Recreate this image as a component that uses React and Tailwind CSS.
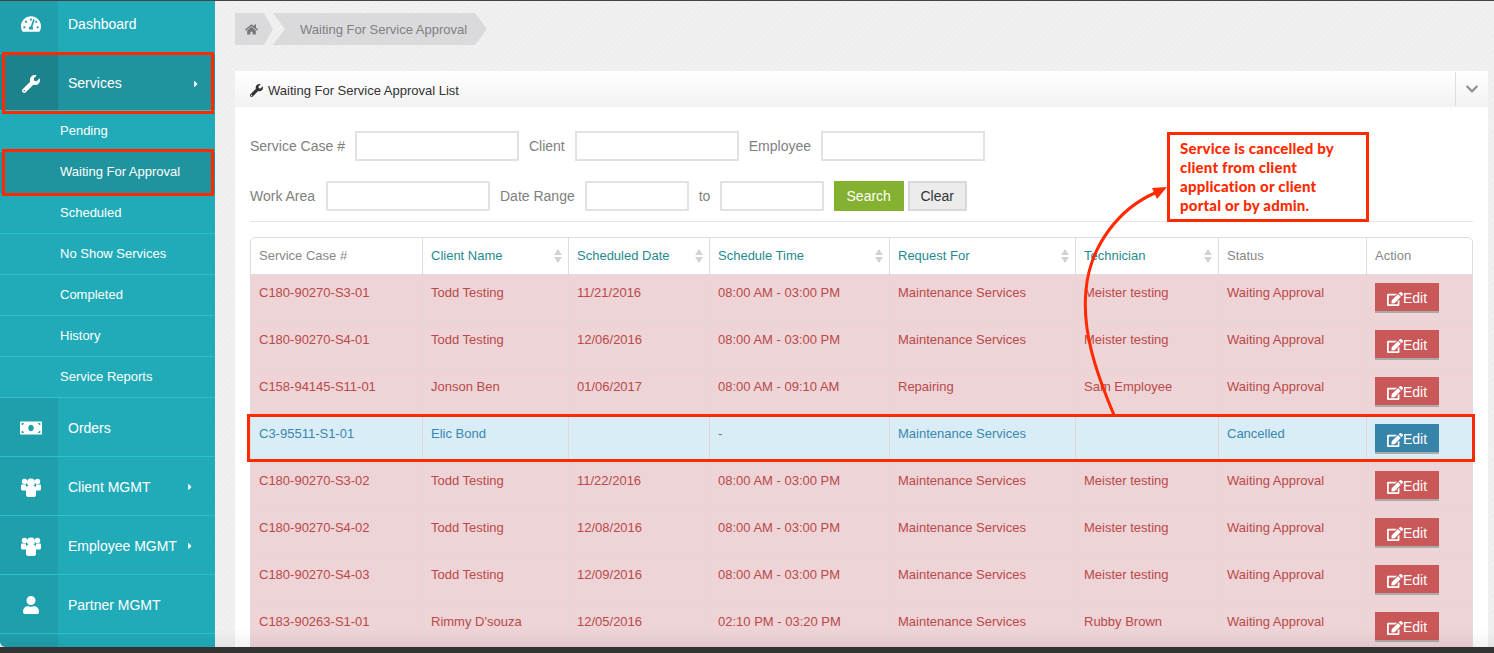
import {
  FaTachometerAlt,
  FaWrench,
  FaMoneyBill,
  FaUser,
  FaHome,
  FaEdit,
  FaChevronDown,
  FaCaretRight,
} from "react-icons/fa";

const subItems = [
  "Pending",
  "Waiting For Approval",
  "Scheduled",
  "No Show Services",
  "Completed",
  "History",
  "Service Reports",
];

const columns = [
  { name: "Service Case #", width: "w-[171px]" },
  { name: "Client Name", width: "w-[146px]", sort: true },
  { name: "Scheduled Date", width: "w-[141px]", sort: true },
  { name: "Schedule Time", width: "w-[180px]", sort: true },
  { name: "Request For", width: "w-[186px]", sort: true },
  { name: "Technician", width: "w-[143px]", sort: true },
  { name: "Status", width: "w-[148px]" },
  { name: "Action", width: "w-[106px]" },
];

const waiting = "Waiting Approval";
const maint = "Maintenance Services";
const rows = [
  ["C180-90270-S3-01", "Todd Testing", "11/21/2016", "08:00 AM - 03:00 PM", maint, "Meister testing", waiting],
  ["C180-90270-S4-01", "Todd Testing", "12/06/2016", "08:00 AM - 03:00 PM", maint, "Meister testing", waiting],
  ["C158-94145-S11-01", "Jonson Ben", "01/06/2017", "08:00 AM - 09:10 AM", "Repairing", "Sam Employee", waiting],
  ["C3-95511-S1-01", "Elic Bond", "", "-", maint, "", "Cancelled"],
  ["C180-90270-S3-02", "Todd Testing", "11/22/2016", "08:00 AM - 03:00 PM", maint, "Meister testing", waiting],
  ["C180-90270-S4-02", "Todd Testing", "12/08/2016", "08:00 AM - 03:00 PM", maint, "Meister testing", waiting],
  ["C180-90270-S4-03", "Todd Testing", "12/09/2016", "08:00 AM - 03:00 PM", maint, "Meister testing", waiting],
  ["C183-90263-S1-01", "Rimmy D'souza", "12/05/2016", "02:10 PM - 03:20 PM", maint, "Rubby Brown", waiting],
];

// old font-awesome group icon, the package version is too flat
const GroupIcon = () => (
  <svg width="20" height="19" viewBox="0 0 20 19" fill="currentColor">
    <circle cx="3.5" cy="3.5" r="2.7" />
    <circle cx="16.5" cy="3.5" r="2.7" />
    <circle cx="10" cy="4.5" r="4" />
    <path d="M0 7.5 Q0 6.5 1 6.5 H5 V12.5 H1.5 Q0 12.5 0 11 Z" />
    <path d="M20 7.5 Q20 6.5 19 6.5 H15 V12.5 H18.5 Q20 12.5 20 11 Z" />
    <path d="M5 10 Q5 8 7 8 H13 Q15 8 15 10 V16.5 Q15 19 12.5 19 H7.5 Q5 19 5 16.5 Z" />
  </svg>
);

// main sidebar row with the darker icon column
const NavItem = ({ icon, label, arrow, active, height = "h-[59px]", pad = "pt-[2px]", arrowClass = "mr-[20px]" }) => (
  <div className={`flex ${height} border-b border-[#2cc0cc] text-white ${active ? "bg-[#1f939e]" : ""}`}>
    <div className={`w-[58px] flex items-center justify-center pl-[4px] text-[20px] ${pad} ${active ? "bg-[#1c838d]" : "bg-[#1f9fab]"}`}>
      {icon}
    </div>
    <div className={`flex-1 flex items-center justify-between pl-[10px] text-[14px] ${pad}`}>
      <span>{label}</span>
      {arrow && <FaCaretRight className={`text-[10px] ${arrowClass}`} />}
    </div>
  </div>
);

const Field = ({ w = "w-[164px]" }) => (
  <input type="text" className={`${w} h-[30px] border-2 border-[#e2e2e2] bg-white`} />
);

const SortArrows = () => (
  <svg width="10" height="16" viewBox="0 0 10 16" className="shrink-0">
    <path d="M5 1 L9 7 L1 7 Z M1 9 L9 9 L5 15 Z" fill="#d2d2d2" />
  </svg>
);

const Sidebar = () => (
  <aside className="w-[215px] shrink-0 bg-[#21abb8] rounded-bl-[6px] overflow-hidden">
    <NavItem icon={<FaTachometerAlt />} label="Dashboard" height="h-[53px]" pad="pb-[6px]" />
    <NavItem icon={<FaWrench className="text-[18px]" />} label="Services" arrow active height="h-[57px]" pad="pt-[3px]" arrowClass="mr-[14px]" />
    {subItems.map((item) => (
      <div
        key={item}
        className={`h-[41px] flex items-center pl-[60px] text-[13px] text-white border-b border-[#2cc0cc] ${
          item === "Waiting For Approval" ? "bg-[#1f939e] border-transparent" : ""
        }`}
      >
        {item}
      </div>
    ))}
    <NavItem icon={<FaMoneyBill className="text-[22px]" />} label="Orders" />
    <NavItem icon={<GroupIcon />} label="Client MGMT" arrow />
    <NavItem icon={<GroupIcon />} label="Employee MGMT" arrow />
    <NavItem icon={<FaUser className="text-[18px]" />} label="Partner MGMT" />
    <div className="h-[14px] flex">
      <div className="w-[58px] bg-[#1f9fab]" />
    </div>
  </aside>
);

const Breadcrumb = () => (
  <div className="flex h-[32px] text-[13px] text-[#808080]">
    <div className="w-[38px] bg-[#dadadc] flex items-center pl-[10px] [clip-path:polygon(0_0,29px_0,38px_50%,29px_100%,0_100%)]">
      <FaHome className="text-[13px] text-[#777]" />
    </div>
    <div className="w-[214px] bg-[#dadadc] flex items-center pl-[27px] pt-[2px] [clip-path:polygon(0_0,202px_0,214px_50%,202px_100%,0_100%,12px_50%)]">
      Waiting For Service Approval
    </div>
  </div>
);

const Filters = () => (
  <div className="text-[14px] text-[#808080]">
    <div className="flex items-center gap-[10px] h-[30px]">
      <label>Service Case #</label>
      <Field />
      <label>Client</label>
      <Field />
      <label>Employee</label>
      <Field />
    </div>
    <div className="flex items-center gap-[10px] h-[30px] mt-[20px]">
      <label className="w-[66px]">Work Area</label>
      <Field />
      <label>Date Range</label>
      <Field w="w-[104px]" />
      <label className="w-[11px]">to</label>
      <Field w="w-[104px]" />
      <button type="button" className="w-[70px] h-[30px] bg-[#84b12f] text-white">
        Search
      </button>
      <button type="button" className="w-[59px] h-[30px] -ml-[6px] bg-[#ececec] border-2 border-[#d8d8d8] text-[#333]">
        Clear
      </button>
    </div>
  </div>
);

const ServiceTable = () => (
  <div className="border border-[#ddd] rounded-t-[5px] overflow-hidden">
    <table className="table-fixed w-full border-separate border-spacing-0 text-[13px]">
      <thead>
        <tr>
          {columns.map((col, i) => (
            <th
              key={col.name}
              className={`${col.width} h-[37px] p-0 font-normal text-left border-b border-[#ddd] ${i > 0 ? "border-l" : ""}`}
            >
              <div className={`flex items-center justify-between pl-[8px] pr-[5px] ${col.sort ? "text-[#1f8a90]" : "text-[#888]"}`}>
                <span>{col.name}</span>
                {col.sort && <SortArrows />}
              </div>
            </th>
          ))}
        </tr>
      </thead>
      <tbody>
        {rows.map((row) => {
          const cancelled = row[6] === "Cancelled";
          return (
            <tr key={row[0]} className={cancelled ? "bg-[#d9edf7] text-[#3a87ad]" : "bg-[#eed3d7] text-[#b94a48]"}>
              {row.map((cell, i) => (
                <td
                  key={i}
                  className={`h-[47px] px-[8px] pt-[8px] align-top leading-[20px] border-b border-[#e6d5d8] ${i > 0 ? "border-l" : ""}`}
                >
                  {cell}
                </td>
              ))}
              <td className="h-[47px] px-[8px] pt-[8px] align-top border-l border-b border-[#e6d5d8]">
                <button
                  type="button"
                  className={`w-[64px] h-[30px] flex items-center justify-center pt-[3px] text-[14px] text-white border-b-2 border-[#aaa] ${
                    cancelled ? "bg-[#3784ab]" : "bg-[#cb5858]"
                  }`}
                >
                  <FaEdit className="text-[16px]" />
                  Edit
                </button>
              </td>
            </tr>
          );
        })}
      </tbody>
    </table>
  </div>
);

// red markup drawn on top of the screenshot
const Annotations = () => (
  <>
    <div className="absolute left-[2px] top-[52px] w-[212px] h-[62px] border-[3px] border-[#ff2a00]" />
    <div className="absolute left-[2px] top-[149px] w-[212px] h-[47px] border-[3px] border-[#ff2a00]" />
    <div className="absolute left-[247px] top-[414px] w-[1228px] h-[48px] border-[3px] border-[#ff2a00]" />
    <div className="absolute left-[1167px] top-[132px] w-[202px] h-[90px] border-[3px] border-[#ff2a00] bg-white pl-[10px] pt-[4px] font-['Lato',sans-serif] font-black text-[15px] tracking-[0.2px] leading-[19px] text-[#ff2a00]">
      Service is cancelled by
      <br />
      client from client
      <br />
      application or client
      <br />
      portal or by admin.
    </div>
    <svg className="absolute left-0 top-0 pointer-events-none" width="1494" height="653">
      <path
        d="M1114 415 C1095 370 1082 330 1086 290 C1090 245 1120 208 1155 193"
        fill="none"
        stroke="#ff2a00"
        strokeWidth="3"
      />
      <polygon points="1152,188 1167,187 1157,199" fill="#ff2a00" />
    </svg>
  </>
);

export default function App() {
  return (
    <div className="relative w-[1494px] h-[653px] overflow-hidden flex flex-col font-['Liberation_Sans',Arial,sans-serif]">
      <div className="h-[1px] bg-[#444]" />
      <div className="flex-1 flex min-h-0 bg-[#eeeeee] bg-[repeating-linear-gradient(135deg,#f1f1f1_0,#f1f1f1_2px,#eeeeee_2px,#eeeeee_4px)]">
        <Sidebar />
        <main className="flex-1 pt-[12px] pl-[20px] pr-[6px] overflow-hidden">
          <Breadcrumb />
          <section className="mt-[26px] bg-white h-[600px]">
            <div className="h-[36px] flex items-center justify-between bg-gradient-to-b from-white to-[#f2f2f2] pl-[15px] text-[13px] text-[#333]">
              <div className="flex items-center gap-[5px] pt-[3px]">
                <FaWrench className="text-[13px]" />
                <span>Waiting For Service Approval List</span>
              </div>
              <div className="w-[33px] h-[34px] border-l border-[#ddd] flex items-center justify-center text-[#8f8f8f]">
                <FaChevronDown className="text-[14px]" />
              </div>
            </div>
            <div className="px-[15px] pt-[24px]">
              <Filters />
              <hr className="mt-[10px] border-[#e5e5e5]" />
              <div className="mt-[15px]">
                <ServiceTable />
              </div>
            </div>
          </section>
        </main>
      </div>
      <div className="h-[6px] bg-[#333]" />
      <div className="absolute left-0 right-0 bottom-[6px] h-[18px] bg-gradient-to-b from-transparent to-black/5 pointer-events-none" />
      <Annotations />
    </div>
  );
}
